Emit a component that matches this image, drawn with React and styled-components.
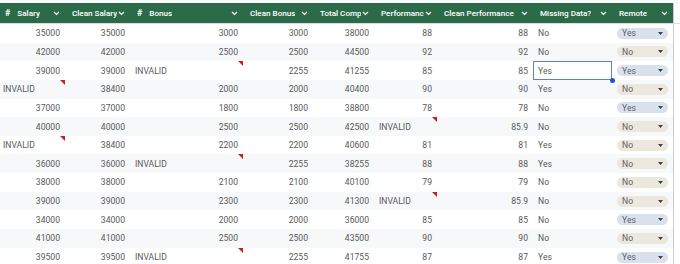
import styled, { createGlobalStyle } from 'styled-components';

const GlobalStyle = createGlobalStyle`
	html, body {
		margin: 0;
		padding: 0;
		background: #ffffff;
		overflow: hidden;
	}
	body {
		font-family: Roboto, 'Noto Sans', sans-serif;
	}
`;

const columns = [
	{ key: 'salary', title: 'Salary', hash: true, width: 67 },
	{ key: 'cleanSalary', title: 'Clean Salary', width: 65 },
	{ key: 'bonus', title: 'Bonus', hash: true, width: 113 },
	{ key: 'cleanBonus', title: 'Clean Bonus', width: 70 },
	{ key: 'total', title: 'Total Comp', width: 61 },
	{ key: 'perf', title: 'Performance', width: 63 },
	{ key: 'cleanPerf', title: 'Clean Performance', width: 96 },
	{ key: 'missing', title: 'Missing Data?', width: 79 },
	{ key: 'remote', title: 'Remote', width: 61 },
];

const rows = [
	['35000', '35000', '3000', '3000', '38000', '88', '88', 'No', 'Yes'],
	['42000', '42000', '2500', '2500', '44500', '92', '92', 'No', 'No'],
	['39000', '39000', 'INVALID', '2255', '41255', '85', '85', 'Yes', 'Yes'],
	['INVALID', '38400', '2000', '2000', '40400', '90', '90', 'Yes', 'No'],
	['37000', '37000', '1800', '1800', '38800', '78', '78', 'No', 'Yes'],
	['40000', '40000', '2500', '2500', '42500', 'INVALID', '85.9', 'No', 'No'],
	['INVALID', '38400', '2200', '2200', '40600', '81', '81', 'Yes', 'No'],
	['36000', '36000', 'INVALID', '2255', '38255', '88', '88', 'Yes', 'No'],
	['38000', '38000', '2100', '2100', '40100', '79', '79', 'No', 'No'],
	['39000', '39000', '2300', '2300', '41300', 'INVALID', '85.9', 'No', 'No'],
	['34000', '34000', '2000', '2000', '36000', '85', '85', 'No', 'Yes'],
	['41000', '41000', '2500', '2500', '43500', '90', '90', 'No', 'No'],
	['39500', '39500', 'INVALID', '2255', '41755', '87', '87', 'Yes', 'Yes'],
];

const gridTemplate = columns.map((c) => `${c.width}px`).join(' ') + ' 1fr';

function Chevron() {
	return (
		<svg width="7" height="5" viewBox="0 0 7 5">
			<polyline
				points="1,1 3.5,3.5 6,1"
				fill="none"
				stroke="#ffffff"
				strokeWidth="1.2"
			/>
		</svg>
	);
}

function Caret() {
	return (
		<svg width="5" height="3" viewBox="0 0 5 3">
			<polygon points="0,0 5,0 2.5,3" fill="#3c4043" />
		</svg>
	);
}

function App() {
	return (
		<>
			<GlobalStyle />
			<Sheet>
				<TopStrip />
				<HeaderRow $template={gridTemplate}>
					{columns.map((c) => (
						<HeaderCell key={c.key}>
							<HeaderLabel>
								{c.hash && <Hash>#</Hash>}
								<span>{c.title}</span>
							</HeaderLabel>
							<Chevron />
						</HeaderCell>
					))}
					<Spare />
				</HeaderRow>
				{rows.map((r, i) => (
					<Row key={i} $template={gridTemplate} $striped={i % 2 === 1}>
						{r.map((v, j) => {
							if (j === 8) {
								return (
									<Cell key={j}>
										<Pill $yes={v === 'Yes'}>
											<span>{v}</span>
											<Caret />
										</Pill>
									</Cell>
								);
							}
							const invalid = v === 'INVALID';
							const left = invalid || j === 7;
							return (
								<Cell key={j} $left={left} $selected={i === 2 && j === 7}>
									{v}
									{invalid && <ErrorMark />}
									{i === 2 && j === 7 && <Handle />}
								</Cell>
							);
						})}
						<Spare />
					</Row>
				))}
			</Sheet>
		</>
	);
}

const Sheet = styled.div`
	width: 682px;
	margin-left: -2px;
	display: flex;
	flex-direction: column;
`;

const TopStrip = styled.div`
	height: 3px;
	background: #f8f9fa;
`;

const HeaderRow = styled.div`
	display: grid;
	grid-template-columns: ${(p) => p.$template};
	height: 20px;
	background: #2c6b4a;
	border-bottom: 1px solid #dadce0;
`;

const HeaderCell = styled.div`
	display: flex;
	align-items: center;
	justify-content: space-between;
	padding: 0 5px 0 7px;
	color: #ffffff;
	font-size: 8.1px;
	font-weight: 500;
	overflow: hidden;
	white-space: nowrap;

	svg {
		flex-shrink: 0;
		margin-left: 1px;
	}
`;

const HeaderLabel = styled.div`
	display: flex;
	align-items: center;
	gap: 7px;
	overflow: hidden;
`;

const Hash = styled.span`
	font-weight: 700;
	font-size: 9px;
`;

const Spare = styled.div`
	background: #ffffff;
	border-left: 1px solid #c8cacd;
`;

const Row = styled.div`
	display: grid;
	grid-template-columns: ${(p) => p.$template};
	height: 18.65px;
	background: ${(p) => (p.$striped ? '#f6f8f9' : '#ffffff')};
`;

const Cell = styled.div`
	position: relative;
	display: flex;
	align-items: center;
	justify-content: ${(p) => (p.$left ? 'flex-start' : 'flex-end')};
	padding: 0 5px;
	font-size: 8.6px;
	color: #595959;
	white-space: nowrap;
	box-shadow: ${(p) => (p.$selected ? 'inset 0 0 0 1px #5b7fe0' : 'none')};
	background: ${(p) => (p.$selected ? '#ffffff' : 'transparent')};
`;

const ErrorMark = styled.div`
	position: absolute;
	top: 0;
	right: 0;
	width: 0;
	height: 0;
	border-top: 5px solid #c5221f;
	border-left: 5px solid transparent;
`;

const Handle = styled.div`
	position: absolute;
	right: -3px;
	bottom: -3px;
	width: 5px;
	height: 5px;
	border-radius: 50%;
	background: #1f55c9;
	z-index: 2;
`;

const Pill = styled.div`
	flex: 1;
	display: flex;
	align-items: center;
	justify-content: space-between;
	height: 11px;
	padding: 0 5px;
	border-radius: 6px;
	background: ${(p) => (p.$yes ? '#d9e1ee' : '#ece8de')};
	color: #5f6368;
	font-size: 8.6px;
`;

export default App;
